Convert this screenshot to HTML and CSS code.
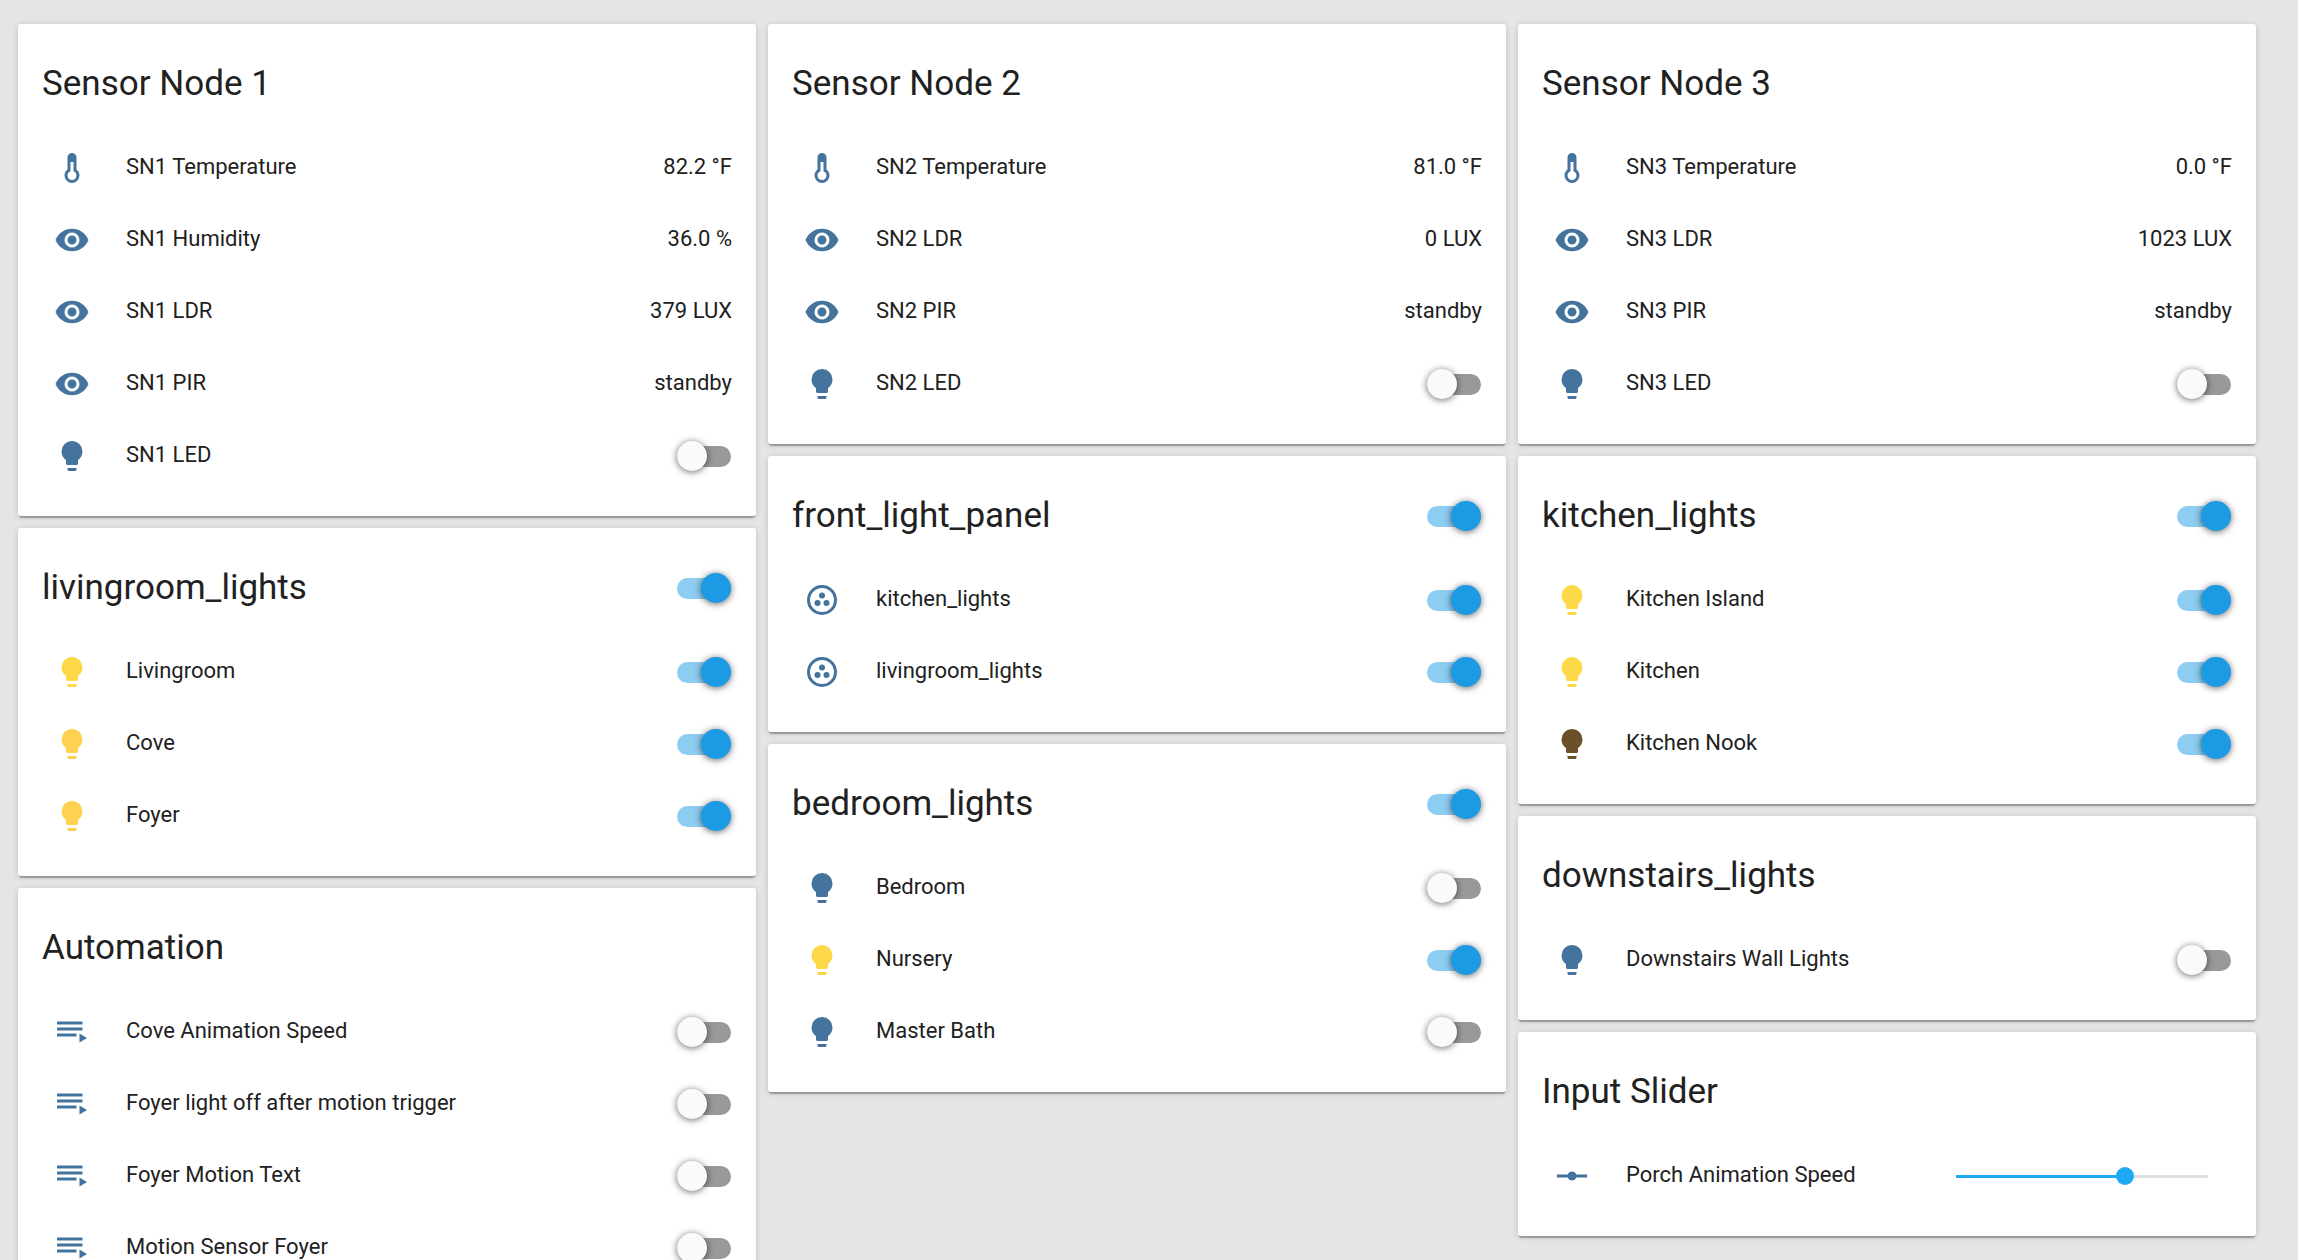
FILE: index.html
```html
<!DOCTYPE html>
<html lang="en">
<head>
    <meta charset="UTF-8">
    <meta name="viewport" content="width=device-width, initial-scale=1.0">
    <title>Home</title>

    <link rel="stylesheet" href="styles.css">
</head>
<body>
    <svg class="icon-defs" aria-hidden="true">
        <symbol id="thermometer" viewBox="0 0 24 24">
            <path d="M17,17A5,5 0 0,1 12,22A5,5 0 0,1 7,17C7,15.36 7.79,13.91 9,13V5A3,3 0 0,1 12,2A3,3 0 0,1 15,5V13C16.21,13.91 17,15.36 17,17M11,8V14.17C9.83,14.58 9,15.69 9,17A3,3 0 0,0 12,20A3,3 0 0,0 15,17C15,15.69 14.17,14.58 13,14.17V8H11Z"/>
        </symbol>
        <symbol id="eye" viewBox="0 0 24 24">
            <path d="M12,9A3,3 0 0,0 9,12A3,3 0 0,0 12,15A3,3 0 0,0 15,12A3,3 0 0,0 12,9M12,17A5,5 0 0,1 7,12A5,5 0 0,1 12,7A5,5 0 0,1 17,12A5,5 0 0,1 12,17M12,4.5C7,4.5 2.73,7.61 1,12C2.73,16.39 7,19.5 12,19.5C17,19.5 21.27,16.39 23,12C21.27,7.61 17,4.5 12,4.5Z"/>
        </symbol>
        <symbol id="bulb" viewBox="0 0 24 24">
            <path d="M12,2A7,7 0 0,0 5,9C5,11.38 6.19,13.47 8,14.74V17A1,1 0 0,0 9,18H15A1,1 0 0,0 16,17V14.74C17.81,13.47 19,11.38 19,9A7,7 0 0,0 12,2M9,21A1,1 0 0,0 10,22H14A1,1 0 0,0 15,21V20H9V21Z"/>
        </symbol>
        <symbol id="group" viewBox="0 0 24 24">
            <circle cx="12" cy="12" r="9" fill="none" stroke="currentColor" stroke-width="2"/>
            <circle cx="12" cy="9" r="2"/>
            <circle cx="9" cy="14" r="2"/>
            <circle cx="15" cy="14" r="2"/>
        </symbol>
        <symbol id="playlist" viewBox="0 0 24 24">
            <path d="M19,9H2V11H19V9M19,5H2V7H19V5M2,15H15V13H2V15M17,13V19L22,16L17,13Z"/>
        </symbol>
        <symbol id="ray" viewBox="0 0 24 24">
            <path d="M2,11H9.17C9.58,9.83 10.69,9 12,9C13.31,9 14.42,9.83 14.83,11H22V13H14.83C14.42,14.17 13.31,15 12,15C10.69,15 9.58,14.17 9.17,13H2V11Z"/>
        </symbol>
    </svg>

    <main class="columns">
        <div class="column">
            <section class="card">
                <div class="card-header"><h2>Sensor Node 1</h2></div>
                <div class="row">
                    <svg class="icon"><use href="#thermometer"/></svg>
                    <span class="name">SN1 Temperature</span>
                    <span class="state">82.2 °F</span>
                </div>
                <div class="row">
                    <svg class="icon"><use href="#eye"/></svg>
                    <span class="name">SN1 Humidity</span>
                    <span class="state">36.0 %</span>
                </div>
                <div class="row">
                    <svg class="icon"><use href="#eye"/></svg>
                    <span class="name">SN1 LDR</span>
                    <span class="state">379 LUX</span>
                </div>
                <div class="row">
                    <svg class="icon"><use href="#eye"/></svg>
                    <span class="name">SN1 PIR</span>
                    <span class="state">standby</span>
                </div>
                <div class="row">
                    <svg class="icon"><use href="#bulb"/></svg>
                    <label class="name" for="sn1-led">SN1 LED</label>
                    <input type="checkbox" class="toggle" id="sn1-led">
                </div>
            </section>

            <section class="card">
                <div class="card-header">
                    <h2><label for="livingroom-lights">livingroom_lights</label></h2>
                    <input type="checkbox" class="toggle" id="livingroom-lights" checked>
                </div>
                <div class="row">
                    <svg class="icon on"><use href="#bulb"/></svg>
                    <label class="name" for="livingroom">Livingroom</label>
                    <input type="checkbox" class="toggle" id="livingroom" checked>
                </div>
                <div class="row">
                    <svg class="icon warm"><use href="#bulb"/></svg>
                    <label class="name" for="cove">Cove</label>
                    <input type="checkbox" class="toggle" id="cove" checked>
                </div>
                <div class="row">
                    <svg class="icon warm"><use href="#bulb"/></svg>
                    <label class="name" for="foyer">Foyer</label>
                    <input type="checkbox" class="toggle" id="foyer" checked>
                </div>
            </section>

            <section class="card">
                <div class="card-header"><h2>Automation</h2></div>
                <div class="row">
                    <svg class="icon"><use href="#playlist"/></svg>
                    <label class="name" for="cove-speed">Cove Animation Speed</label>
                    <input type="checkbox" class="toggle" id="cove-speed">
                </div>
                <div class="row">
                    <svg class="icon"><use href="#playlist"/></svg>
                    <label class="name" for="foyer-off">Foyer light off after motion trigger</label>
                    <input type="checkbox" class="toggle" id="foyer-off">
                </div>
                <div class="row">
                    <svg class="icon"><use href="#playlist"/></svg>
                    <label class="name" for="foyer-text">Foyer Motion Text</label>
                    <input type="checkbox" class="toggle" id="foyer-text">
                </div>
                <div class="row">
                    <svg class="icon"><use href="#playlist"/></svg>
                    <label class="name" for="foyer-motion">Motion Sensor Foyer</label>
                    <input type="checkbox" class="toggle" id="foyer-motion">
                </div>
            </section>
        </div>

        <div class="column">
            <section class="card">
                <div class="card-header"><h2>Sensor Node 2</h2></div>
                <div class="row">
                    <svg class="icon"><use href="#thermometer"/></svg>
                    <span class="name">SN2 Temperature</span>
                    <span class="state">81.0 °F</span>
                </div>
                <div class="row">
                    <svg class="icon"><use href="#eye"/></svg>
                    <span class="name">SN2 LDR</span>
                    <span class="state">0 LUX</span>
                </div>
                <div class="row">
                    <svg class="icon"><use href="#eye"/></svg>
                    <span class="name">SN2 PIR</span>
                    <span class="state">standby</span>
                </div>
                <div class="row">
                    <svg class="icon"><use href="#bulb"/></svg>
                    <label class="name" for="sn2-led">SN2 LED</label>
                    <input type="checkbox" class="toggle" id="sn2-led">
                </div>
            </section>

            <section class="card">
                <div class="card-header">
                    <h2><label for="front-panel">front_light_panel</label></h2>
                    <input type="checkbox" class="toggle" id="front-panel" checked>
                </div>
                <div class="row">
                    <svg class="icon"><use href="#group"/></svg>
                    <label class="name" for="panel-kitchen">kitchen_lights</label>
                    <input type="checkbox" class="toggle" id="panel-kitchen" checked>
                </div>
                <div class="row">
                    <svg class="icon"><use href="#group"/></svg>
                    <label class="name" for="panel-livingroom">livingroom_lights</label>
                    <input type="checkbox" class="toggle" id="panel-livingroom" checked>
                </div>
            </section>

            <section class="card">
                <div class="card-header">
                    <h2><label for="bedroom-lights">bedroom_lights</label></h2>
                    <input type="checkbox" class="toggle" id="bedroom-lights" checked>
                </div>
                <div class="row">
                    <svg class="icon"><use href="#bulb"/></svg>
                    <label class="name" for="bedroom">Bedroom</label>
                    <input type="checkbox" class="toggle" id="bedroom">
                </div>
                <div class="row">
                    <svg class="icon on"><use href="#bulb"/></svg>
                    <label class="name" for="nursery">Nursery</label>
                    <input type="checkbox" class="toggle" id="nursery" checked>
                </div>
                <div class="row">
                    <svg class="icon"><use href="#bulb"/></svg>
                    <label class="name" for="master-bath">Master Bath</label>
                    <input type="checkbox" class="toggle" id="master-bath">
                </div>
            </section>
        </div>

        <div class="column">
            <section class="card">
                <div class="card-header"><h2>Sensor Node 3</h2></div>
                <div class="row">
                    <svg class="icon"><use href="#thermometer"/></svg>
                    <span class="name">SN3 Temperature</span>
                    <span class="state">0.0 °F</span>
                </div>
                <div class="row">
                    <svg class="icon"><use href="#eye"/></svg>
                    <span class="name">SN3 LDR</span>
                    <span class="state">1023 LUX</span>
                </div>
                <div class="row">
                    <svg class="icon"><use href="#eye"/></svg>
                    <span class="name">SN3 PIR</span>
                    <span class="state">standby</span>
                </div>
                <div class="row">
                    <svg class="icon"><use href="#bulb"/></svg>
                    <label class="name" for="sn3-led">SN3 LED</label>
                    <input type="checkbox" class="toggle" id="sn3-led">
                </div>
            </section>

            <section class="card">
                <div class="card-header">
                    <h2><label for="kitchen-lights">kitchen_lights</label></h2>
                    <input type="checkbox" class="toggle" id="kitchen-lights" checked>
                </div>
                <div class="row">
                    <svg class="icon on"><use href="#bulb"/></svg>
                    <label class="name" for="kitchen-island">Kitchen Island</label>
                    <input type="checkbox" class="toggle" id="kitchen-island" checked>
                </div>
                <div class="row">
                    <svg class="icon on"><use href="#bulb"/></svg>
                    <label class="name" for="kitchen">Kitchen</label>
                    <input type="checkbox" class="toggle" id="kitchen" checked>
                </div>
                <div class="row">
                    <svg class="icon dim"><use href="#bulb"/></svg>
                    <label class="name" for="kitchen-nook">Kitchen Nook</label>
                    <input type="checkbox" class="toggle" id="kitchen-nook" checked>
                </div>
            </section>

            <section class="card">
                <div class="card-header"><h2>downstairs_lights</h2></div>
                <div class="row">
                    <svg class="icon"><use href="#bulb"/></svg>
                    <label class="name" for="downstairs">Downstairs Wall Lights</label>
                    <input type="checkbox" class="toggle" id="downstairs">
                </div>
            </section>

            <section class="card">
                <div class="card-header"><h2>Input Slider</h2></div>
                <div class="row">
                    <svg class="icon"><use href="#ray"/></svg>
                    <label class="name" for="porch-speed">Porch Animation Speed</label>
                    <input type="range" class="slider" id="porch-speed" min="0" max="100" value="67" style="--value: 67%">
                </div>
            </section>
        </div>
    </main>

    <script>
        // Keep the filled part of the slider in step with the thumb
        var slider = document.getElementById("porch-speed");
        slider.oninput = function() { slider.style.setProperty("--value", slider.value + "%") };
    </script>
</body>
</html>
```
FILE: styles.css
```css
body {
    margin: 0;
    height: 100vh;
    overflow: hidden;
    background-color: #e5e5e5;
    color: #212121;
    font-family: Roboto, "Noto Sans", sans-serif;
    font-size: 22px;
    line-height: 30px;
}
.icon-defs {
    display: none;
}
.columns {
    display: grid;
    grid-template-columns: repeat(3, minmax(0, 1fr));
    align-items: start;
    gap: 12px;
    padding: 24px 42px 24px 18px;
}
.column {
    display: flex;
    flex-direction: column;
    gap: 12px;
}
.card {
    padding-bottom: 24px;
    background-color: white;
    border-radius: 3px;
    box-shadow: 0 3px 1px -1px rgba(0,0,0,0.28), 0 1px 6px rgba(0,0,0,0.16);
}
.card-header {
    display: flex;
    align-items: center;
    justify-content: space-between;
    padding: 36px 24px 24px;
}
.card-header h2 {
    margin: 0;
    font-size: 35px;
    font-weight: 400;
    line-height: 48px;
}
.row {
    display: flex;
    align-items: center;
    height: 72px;
    padding: 0 24px;
}
.icon {
    flex: none;
    width: 36px;
    height: 36px;
    margin: 0 36px 0 12px;
    color: #44739e;
    fill: currentColor;
}
.icon.on {
    color: #fdd848;
}
.icon.warm {
    color: #fed250;
}
.icon.dim {
    color: #6b5029;
}
.name {
    flex: 1;
    padding-bottom: 3px;
}
.state {
    padding-bottom: 3px;
}
.toggle {
    appearance: none;
    position: relative;
    flex: none;
    width: 54px;
    height: 30px;
    margin: 0 1px 0 0;
    cursor: pointer;
}
.toggle::before {
    content: "";
    position: absolute;
    top: 5px;
    left: 0;
    width: 54px;
    height: 21px;
    border-radius: 11px;
    background-color: #999;
}
.toggle::after {
    content: "";
    position: absolute;
    top: 0;
    left: 0;
    width: 30px;
    height: 30px;
    border-radius: 50%;
    background-color: #fafafa;
    box-shadow: 0 1px 7px rgba(0,0,0,0.6);
}
.toggle:checked::before {
    background-color: #8dcdf1;
}
.toggle:checked::after {
    left: 24px;
    background-color: #1c9be4;
}
.slider {
    appearance: none;
    width: 270px;
    height: 18px;
    margin: 0 15px 0 0;
    background: linear-gradient(to right, #1da9f5 var(--value), #e0e0e0 var(--value)) center / calc(100% - 18px) 3px no-repeat;
    cursor: pointer;
}
.slider::-webkit-slider-thumb {
    appearance: none;
    width: 18px;
    height: 18px;
    border-radius: 50%;
    background-color: #1da9f5;
}
```
